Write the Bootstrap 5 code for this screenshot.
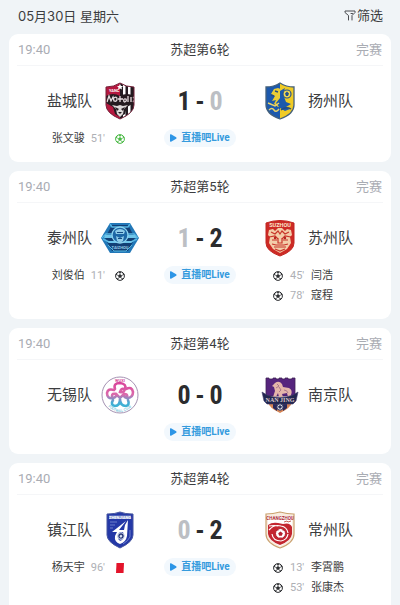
<!DOCTYPE html>
<html lang="zh-CN">
<head>
<meta charset="utf-8">
<meta name="viewport" content="width=device-width, initial-scale=1">
<title>苏超赛程</title>
<link href="https://cdn.jsdelivr.net/npm/bootstrap@5.3.0/dist/css/bootstrap.min.css" rel="stylesheet">
<style>
body{background:#f0f4f7;color:#3c3d40;font-family:Roboto,"Noto Sans CJK SC",sans-serif;font-size:13px;line-height:20px}
.day-bar{padding:6px 17px 0 18px;height:34px}
.day-title{font-family:Inter,"Noto Sans CJK SC",sans-serif;font-size:13px;line-height:20px}
.filter-btn{font-size:13px;line-height:20px;color:#3c3d40;gap:1px}
.match-list{padding:0 9px;gap:9px}
.match{background:#fff;border-radius:9px;padding-bottom:13px}
.match-open{padding-bottom:28px}
.match-head{display:grid;grid-template-columns:1fr auto 1fr;height:32px;padding:1px 1px 0;margin:0 8px;border-bottom:1px solid #f5f6f8;align-items:center;font-size:13px}
.match-time,.match-state{color:#a9acb3}
.match-grid{display:grid;grid-template-columns:1fr 120px 1fr;row-gap:8px;padding-top:15px}
.team{gap:8px;font-size:15px;line-height:22px}
.crest{width:40px;height:40px;flex:none}
.score{font-family:"Liberation Sans Narrow","Roboto Condensed",Roboto,sans-serif;font-weight:700;font-size:26px;line-height:40px;color:#2b2c2e;display:grid;grid-template-columns:16px 16px 16px;justify-content:center;text-align:center}
.score .lost{color:#bcbfc4}
.live{height:18px;padding:0 6px;gap:4px;border-radius:9px;background:#f2f8fd;color:#359bdd;font-size:10px;line-height:18px;font-weight:700}
.live svg{width:7px;height:8px}
.events{font-size:11px;line-height:20px}
.events li{display:flex;align-items:center}
.events svg{width:10px;height:10px;flex:none}
.events .minute{color:#aeb0b5}
.events-home li{justify-content:flex-end;padding-right:15px}
.events-home .minute{margin:0 10px 0 6px}
.events-away li{padding-left:13px}
.events-away .minute{min-width:15px;margin:0 6px 0 7px}
.goal-ball{color:#2c2e31}
.goal-penalty{color:#48b843}
</style>
<script src="https://cdn.jsdelivr.net/npm/bootstrap@5.3.0/dist/js/bootstrap.bundle.min.js"></script>
</head>
<body>
<svg class="d-none" aria-hidden="true">
  <symbol id="ball" viewBox="0 0 20 20">
    <circle cx="10" cy="10" r="8.8" fill="#fff" stroke="currentColor" stroke-width="2"/>
    <path fill="currentColor" d="M10 6l4 3-1.500 4.500h-5L6 9zM6.500 1.800h7L10 4.500zM1 8l3-.5L5 4 2 5zM19 8l-3-.5L15 4l3 1zM3 15l3.500-.5L7 18zM17 15l-3.500-.5L13 18z"/>
    <path stroke="currentColor" stroke-width="1.300" d="M10 6V3M14 9l3-1.500M12.500 13.500l2 2.500M7.500 13.500l-2 2.500M6 9L3 7.500"/>
  </symbol>
  <symbol id="play" viewBox="0 0 7 8"><path fill="#2c95e6" d="M0 1Q0 0 1 .3l5.200 3q.8.700 0 1.400l-5.200 3Q0 8 0 7z"/></symbol>
</svg>

<header class="day-bar d-flex justify-content-between align-items-start">
  <h1 class="day-title m-0 fw-normal">05月30日 星期六</h1>
  <button type="button" class="filter-btn btn p-0 border-0 d-flex align-items-center">
    <svg width="12" height="12" viewBox="0 0 12 12" fill="none" stroke="#4a4c50" stroke-linejoin="round" stroke-linecap="round" aria-hidden="true"><path d="M4.500 10V5.500L1 2.500V1h10v1.500L8 5.500V10M7 3.500h1.500"/></svg>筛选
  </button>
</header>

<main class="match-list d-flex flex-column">
  <article class="match">
    <div class="match-head"><time class="match-time">19:40</time><span>苏超第6轮</span><span class="match-state text-end">完赛</span></div>
    <div class="match-grid">
      <div class="team d-flex align-items-center justify-content-end"><span>盐城队</span>
        <svg class="crest" viewBox="0 0 40 40" aria-hidden="true">
          <clipPath id="yc"><path d="M6 6Q14 6 20 2q6 4 14 4v18q0 8-14 14Q6 32 6 24z"/></clipPath>
          <g clip-path="url(#yc)"><path fill="#b5183f" d="M0 0h20v40H0z"/><path fill="#231a20" d="M20 0h20v40H20z"/><path fill="#fff" d="M23 0h2.500v40H23zM28 0h2.500v40H28z"/>
          <path fill="#fff" d="M20 3l1 2h2l-1.500 1.500.5 2-2-1-2 1 .5-2L17 5h2z"/>
          <text x="9" y="11" font-size="4" font-weight="700" fill="#fff">YANC</text>
          <path fill="#251b20" d="M6 15q7-4 14 0 7-4 14 0v7l-7 4-2 7-5 3-5-3-2-7-7-4z"/>
          <path fill="none" stroke="#e9dfe2" stroke-width="1.300" d="M7 21l2-6 2 5 2-4 1 4q3 1 3-2t-3-1m6-2v6m-2-3h5m1 3q3 0 2-3-3-1-2 3m4 0v-6m3 6v-5m2 5q3-3 0-5"/>
          <path fill="#ded8d8" d="M12 24l5 1 3-1 3 1 5-1-4 4-1 5-3 3-3-3-1-5z"/><path fill="#251b20" d="M15 26l4 2-2 2zM25 26l-4 2 2 2zM18 31h4l-2 2z"/></g>
          <path fill="none" stroke="#732139" d="M6 6Q14 6 20 2q6 4 14 4v18q0 8-14 14Q6 32 6 24z"/>
        </svg></div>
      <div class="score"><span>1</span><span>-</span><span class="lost">0</span></div>
      <div class="team d-flex align-items-center">
        <svg class="crest" viewBox="0 0 40 40" aria-hidden="true">
          <clipPath id="yz"><path d="M6 6q8 0 14-4 6 4 14 4v18q0 9-14 14Q6 33 6 24z"/></clipPath>
          <g clip-path="url(#yz)"><path fill="#1c59ad" d="M0 0h20v40H0z"/><path fill="#f0cb24" d="M20 0h20v40H20z"/>
          <path fill="#e9cc36" d="M11 13l3-5 4-1 5 2-2 3 2 3-3 4 3 4-5 3-4-3 2-4-4 1 3-5z"/>
          <path fill="#1c59ad" d="M20 10l5-3-2 6 3 8 5 2-5 3 4 2-5 2-5-3-4-5 4-5z"/>
          <circle cx="27" cy="13" r="4" fill="#f3d950" stroke="#27528d" stroke-width="1.200"/><path fill="#27528d" d="M27 10.500l2 2-1 2.500h-2l-1-2.500z"/>
          <path stroke="#e9d36a" stroke-width="1.500" fill="none" d="M8 22l7 3 4-3M9 29q3-3 5 0t5-1"/><path stroke="#244b81" stroke-width="1.400" fill="none" d="M21 29q5-4 10-1M11 14l3 1M15 10l3 1"/></g>
          <path fill="none" stroke="#45617b" stroke-width="1.300" d="M6 6q8 0 14-4 6 4 14 4v18q0 9-14 14Q6 33 6 24z"/>
        </svg><span>扬州队</span></div>
      <ul class="events events-home list-unstyled m-0"><li><span>张文骏</span><span class="minute">51'</span><svg class="goal-penalty" role="img" aria-label="点球"><use href="#ball"/></svg></li></ul>
      <div class="d-flex justify-content-center align-items-start"><a href="#" class="live d-flex align-items-center text-decoration-none"><svg aria-hidden="true"><use href="#play"/></svg>直播吧Live</a></div>
      <div></div>
    </div>
  </article>

  <article class="match">
    <div class="match-head"><time class="match-time">19:40</time><span>苏超第5轮</span><span class="match-state text-end">完赛</span></div>
    <div class="match-grid">
      <div class="team d-flex align-items-center justify-content-end"><span>泰州队</span>
        <svg class="crest" viewBox="0 0 40 40" aria-hidden="true">
          <path fill="#2278b8" d="M10 5h20l3 5 6 10-6 10-3 5H10l-3-5L1 20 7 10z"/>
          <path fill="#123f75" d="M12 7h16l7 13-7 13H12L5 20z"/>
          <path fill="none" stroke="#55b5e2" stroke-width="1.400" d="M10 6l2 3h16l2-3M2 20l4-4h8m24 4l-4-4h-8M3 21l6 3h6m22-3l-6 3h-6"/>
          <path fill="#6ec5ea" d="M5 17h9l2 3H4zM26 17h9l2 3H24zM7 23h8l3 2H9zM25 23h8l-2 2h-9z"/>
          <circle cx="20" cy="17" r="8" fill="#1d67a6" stroke="#8dd3ef" stroke-width="1.300"/>
          <path fill="#8fcbe8" d="M15 13q5-4 10 0l-1 3h-8zM16 18l4 2 4-2-1 5-3 2-3-2z"/><path fill="#174c83" d="M17 14h6v1h-6zM18 20h4v1h-4z"/>
          <text x="20" y="31" text-anchor="middle" font-size="4" font-weight="700" fill="#9acee9">TAIZHOU</text>
          <path fill="none" stroke="#57b6dc" d="M8 27l6 6h12l6-6"/>
        </svg></div>
      <div class="score"><span class="lost">1</span><span>-</span><span>2</span></div>
      <div class="team d-flex align-items-center">
        <svg class="crest" viewBox="0 0 40 40" aria-hidden="true">
          <path fill="#cd2a25" stroke="#c12722" d="M6 5q14-5 28 0v20q0 8-14 13Q6 33 6 25z"/>
          <text x="20" y="9" text-anchor="middle" font-size="5.500" font-weight="700" fill="#fae4cb">SUZHOU</text>
          <path fill="#f3cda9" d="M9 12l4-1 2 2 3-3h4l3 3 2-2 4 1 1 5-2 2 1 6-4 6-7 4-7-4-4-6 1-6-2-2z"/>
          <path fill="none" stroke="#c8352b" stroke-width="1.200" d="M11 14l4 2 3-3 2 3 2-3 3 3 4-2M9 19l6-1 3 3m13-2l-6-1-3 3M12 22h5m6 0h5M18 20v5h4v-5M12 26l4 1h8l4-1M14 29h12M15 31l5 2 5-2"/>
          <circle cx="15" cy="20" r="1.200" fill="#b6231f"/><circle cx="25" cy="20" r="1.200" fill="#b6231f"/>
        </svg><span>苏州队</span></div>
      <ul class="events events-home list-unstyled m-0"><li><span>刘俊伯</span><span class="minute">11'</span><svg class="goal-ball" role="img" aria-label="进球"><use href="#ball"/></svg></li></ul>
      <div class="d-flex justify-content-center align-items-start"><a href="#" class="live d-flex align-items-center text-decoration-none"><svg aria-hidden="true"><use href="#play"/></svg>直播吧Live</a></div>
      <ul class="events events-away list-unstyled m-0"><li><svg class="goal-ball" role="img" aria-label="进球"><use href="#ball"/></svg><span class="minute">45'</span><span>闫浩</span></li><li><svg class="goal-ball" role="img" aria-label="进球"><use href="#ball"/></svg><span class="minute">78'</span><span>寇程</span></li></ul>
    </div>
  </article>

  <article class="match">
    <div class="match-head"><time class="match-time">19:40</time><span>苏超第4轮</span><span class="match-state text-end">完赛</span></div>
    <div class="match-grid">
      <div class="team d-flex align-items-center justify-content-end"><span>无锡队</span>
        <svg class="crest" viewBox="0 0 40 40" aria-hidden="true">
          <linearGradient id="wx" gradientUnits="userSpaceOnUse" x1="0" y1="5" x2="0" y2="34"><stop offset="0" stop-color="#d83c96"/><stop offset=".5" stop-color="#dc69ab"/><stop offset=".78" stop-color="#43add5"/><stop offset="1" stop-color="#39b4d2"/></linearGradient>
          <circle cx="20" cy="20" r="18" fill="#fff" stroke="#a492b2"/>
          <text x="20" y="6.500" text-anchor="middle" font-size="4" font-weight="700" fill="#d44e9b">WUXI</text>
          <g fill="none" stroke="url(#wx)" stroke-width="2.600" stroke-linecap="round">
            <path d="M15 14q-2-6 5-6 7 1 5 6-1 4-5 3 1-4 4-3"/>
            <path d="M26 14q6-3 7 3 0 6-6 6-4-1-3-4 4 0 3 3"/>
            <path d="M14 15q-6-2-7 3 0 6 6 5 4-1 3-4-4-1-4 2"/>
            <path d="M13 25q-3 5 2 6 5 0 5-7 0 7 6 7 4-1 2-6"/>
            <path d="M16 19l4 4 4-4"/>
          </g>
          <path id="wxarc" fill="none" d="M6 29q14 16 28 0"/>
          <text font-size="3.500" fill="#4eb2d0"><textPath href="#wxarc" startOffset="3">FOOTBALL CLUB</textPath></text>
        </svg></div>
      <div class="score"><span>0</span><span>-</span><span>0</span></div>
      <div class="team d-flex align-items-center">
        <svg class="crest" viewBox="0 0 40 40" aria-hidden="true">
          <path fill="#56247d" stroke="#3f2257" stroke-width=".8" d="M6 3h3v1h4V3h3v1h3V3h3v1h3V3h3v1h4V3h3v18H6z"/>
          <path fill="#d68555" d="M8 27h24q-1 6-12 11Q9 33 8 27z"/><path fill="#29295a" d="M13 26h4v10l-4-3zM23 26h4v7l-4 3z"/>
          <path fill="#e4b5aa" d="M15 8q4-3 7 1l1 3 6 1q4 2 2 7l1 2h-4l-1-4-5 1 1 3h-4l-1-4-2 4h-3l2-6-1-4-2-1z"/>
          <path fill="none" stroke="#9a6581" stroke-width=".8" d="M17 9l2 2-3 2m3-1l2 3-2 2m5-2q3 0 4 3"/>
          <path fill="#222750" stroke="#413b6b" stroke-width=".6" d="M2 17l5 3q13 5 26 0l5-3-2 9-3 3h-6q-7 2-14 0H7l-3-3z"/>
          <text x="20" y="27" text-anchor="middle" font-size="6" font-weight="700" font-family="Liberation Serif,serif" fill="#dfcacb">NAN JING</text>
          <circle cx="20" cy="32" r="3.200" fill="#eae7ec" stroke="#28305b"/><path fill="#28305b" d="M20 30l2 1.500-1 2h-2l-1-2z"/>
        </svg><span>南京队</span></div>
      <div></div>
      <div class="d-flex justify-content-center align-items-start"><a href="#" class="live d-flex align-items-center text-decoration-none"><svg aria-hidden="true"><use href="#play"/></svg>直播吧Live</a></div>
      <div></div>
    </div>
  </article>

  <article class="match match-open">
    <div class="match-head"><time class="match-time">19:40</time><span>苏超第4轮</span><span class="match-state text-end">完赛</span></div>
    <div class="match-grid">
      <div class="team d-flex align-items-center justify-content-end"><span>镇江队</span>
        <svg class="crest" viewBox="0 0 40 40" aria-hidden="true">
          <path fill="#2438a7" stroke="#4555a0" d="M7 4q8 0 13-2 5 2 13 2v21q0 7-13 13Q7 32 7 25z"/>
          <path fill="#7d8fc8" d="M9 5.500h22V9H9z"/><text x="20" y="9" text-anchor="middle" font-size="4" font-weight="700" fill="#fff">ZHENJIANG</text>
          <path fill="none" stroke="#7e91d4" stroke-width=".8" d="M10 12h7M10 15h5M10 18h3M30 20v7q-2 4-7 7"/>
          <path fill="#fff" fill-rule="evenodd" d="M28 10l-1 16q-1 6-7 8-6-2-5-8l2-4h-5L26 11l-7 9h5l1-5zM23 22h-3q-3 3-2 6 1 4 4 2 3-3 1-8z"/>
          <circle cx="21" cy="26" r="3.300" fill="#203073" stroke="#dce4f5"/><path fill="#dce4f5" d="M21 24.500l1.500 1.500-1 1.500h-1.500L19.500 26z"/>
        </svg></div>
      <div class="score"><span class="lost">0</span><span>-</span><span>2</span></div>
      <div class="team d-flex align-items-center">
        <svg class="crest" viewBox="0 0 40 40" aria-hidden="true">
          <path fill="#f9ece0" stroke="#caa270" stroke-width="1.200" d="M6 4q7 0 14-2 7 2 14 2v20q0 9-14 14Q6 33 6 24z"/>
          <path fill="#fff" d="M8 6h24v18q-1 7-12 12Q9 31 8 24z"/>
          <text x="20" y="10" text-anchor="middle" font-size="4.500" font-weight="700" fill="#ac2632">CHANGZHOU</text>
          <path fill="#c32630" d="M8 15q4-3 10-2l5 1q7-2 9 3v7q-1 7-12 11Q9 31 8 24z"/>
          <path stroke="#fff" stroke-width="1.200" fill="none" d="M9 20q5-6 12-4 6 1 7 7M12 24q1 7 9 7 6-1 7-7M9 16q6-1 9 0"/>
          <circle cx="20.500" cy="23.500" r="5" fill="#fff" stroke="#b51e2b"/><path fill="#b51e2b" d="M20.500 21.500l2.300 1.700-1 2.600h-2.600l-1-2.600zM17 20l2-1-1 2zM24 20l-2-1 1 2zM19 27.500h3l-1.500 1z"/>
          <path fill="none" stroke="#c56357" d="M24 12l3-1 1 1 3-1"/>
        </svg><span>常州队</span></div>
      <ul class="events events-home list-unstyled m-0"><li><span>杨天宇</span><span class="minute">96'</span><svg viewBox="0 0 10 10" role="img" aria-label="红牌"><path fill="#e3142a" d="M1.500 0H9l-.5 10H1z"/></svg></li></ul>
      <div class="d-flex justify-content-center align-items-start"><a href="#" class="live d-flex align-items-center text-decoration-none"><svg aria-hidden="true"><use href="#play"/></svg>直播吧Live</a></div>
      <ul class="events events-away list-unstyled m-0"><li><svg class="goal-ball" role="img" aria-label="进球"><use href="#ball"/></svg><span class="minute">13'</span><span>李霄鹏</span></li><li><svg class="goal-ball" role="img" aria-label="进球"><use href="#ball"/></svg><span class="minute">53'</span><span>张康杰</span></li></ul>
    </div>
  </article>
</main>
</body>
</html>
